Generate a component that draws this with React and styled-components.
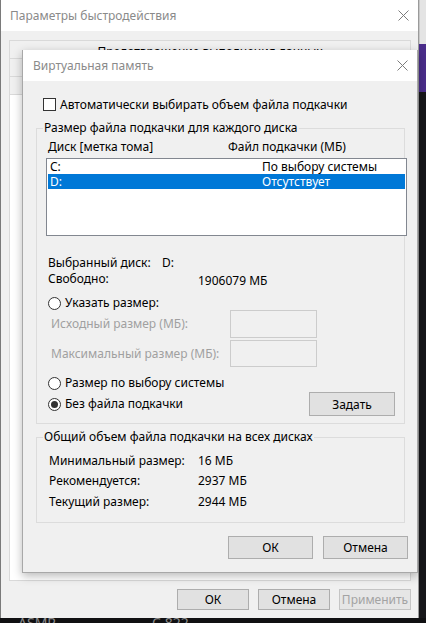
import styled, { createGlobalStyle } from "styled-components";

const GlobalStyle = createGlobalStyle`
  html, body {
    margin: 0;
    padding: 0;
    background: #121214;
  }
  body {
    font-family: "Noto Sans", "Liberation Sans", sans-serif;
    font-size: 12px;
    line-height: 16px;
    color: #000;
  }
`;

const Screen = styled.div`
  position: relative;
  width: 426px;
  height: 623px;
  overflow: hidden;
  background: #121214;
  display: flex;
  flex-direction: column;
`;

const DesktopRow = styled.div`
  display: flex;
  height: 618px;
`;

const SideStrip = styled.div`
  flex: 1;
  display: flex;
  flex-direction: column;
`;

const StripPart = styled.div`
  height: ${(p) => (p.$h ? `${p.$h}px` : "auto")};
  flex: ${(p) => (p.$h ? "none" : 1)};
  background: ${(p) => p.$bg};
  border-left: 1px solid ${(p) => p.$edge || "transparent"};
`;

const TaskStrip = styled.div`
  flex: 1;
  display: flex;
  gap: 96px;
  padding-left: 18px;
  overflow: hidden;
  color: #8a8a8a;
  font-size: 14px;
  line-height: 10px;
  background: #101012;
`;

/* ---------- back window ---------- */

const Window = styled.div`
  width: 417px;
  display: flex;
  flex-direction: column;
  background: #f0f0f0;
  border-left: 1px solid #7a7a7a;
  border-right: 1px solid #9a9a9a;
`;

const TitleBar = styled.div`
  height: 31px;
  flex: none;
  background: #fff;
  display: flex;
  align-items: center;
  justify-content: space-between;
  padding: 0 ${(p) => p.$padRight || 10}px 0 ${(p) => p.$padLeft || 9}px;
  color: #8a8a8a;
  font-size: 12px;
`;

const CloseIcon = () => (
  <svg width="11" height="11" viewBox="0 0 11 11">
    <path d="M0.5 0.5 L10.5 10.5 M10.5 0.5 L0.5 10.5" stroke="#7c7c7c" strokeWidth="1" fill="none" />
  </svg>
);

const WindowBody = styled.div`
  flex: 1;
  display: flex;
  flex-direction: column;
  padding: 9px 7px 8px 8px;
`;

const TabRow = styled.div`
  height: 18px;
  flex: none;
  border: 1px solid #d9d9d9;
  border-bottom: none;
  padding-top: ${(p) => p.$textDrop || 0}px;
  box-sizing: border-box;
  display: flex;
  align-items: center;
  justify-content: center;
  color: #000;
  background: #f0f0f0;
`;

const TabPanel = styled.div`
  flex: 1;
  background: #fff;
  border: 1px solid #d9d9d9;
`;

const WindowButtons = styled.div`
  display: flex;
  justify-content: flex-end;
  gap: 9px;
  margin-top: 8px;
`;

const Button = styled.button`
  width: ${(p) => p.$w || 72}px;
  height: ${(p) => p.$h || 21}px;
  padding: 0;
  font-family: inherit;
  font-size: 12px;
  background: ${(p) => (p.disabled ? "#e6e6e6" : "#e1e1e1")};
  color: ${(p) => (p.disabled ? "#a3a3a3" : "#000")};
  border: 1px solid ${(p) => (p.disabled ? "#c4c4c4" : "#adadad")};
  border-radius: 0;
`;

/* ---------- virtual memory dialog ---------- */

const Dialog = styled.div`
  position: absolute;
  left: 22px;
  top: 50px;
  width: 394px;
  height: 522px;
  display: flex;
  flex-direction: column;
  background: #f0f0f0;
  border: 1px solid #a8a8a8;
  border-top: none;
  box-shadow: 0 3px 9px rgba(0, 0, 0, 0.28);
`;

const DialogBody = styled.div`
  flex: 1;
  display: flex;
  flex-direction: column;
  padding: 17px 12px 0 13px;
`;

const CheckRow = styled.label`
  display: flex;
  align-items: center;
  gap: 4px;
  margin-left: 7px;
  height: 13px;
`;

const CheckBox = styled.span`
  width: 11px;
  height: 11px;
  border: 1px solid #333;
  background: #fff;
  flex: none;
`;

const Group = styled.fieldset`
  margin: ${(p) => p.$top}px 0 0 0;
  padding: 0 0 ${(p) => p.$bottom}px 0;
  border: 1px solid #dcdcdc;
  min-width: 0;
  display: flex;
  flex-direction: column;
`;

const Legend = styled.legend`
  margin-left: 6px;
  padding: 0 1px;
  line-height: 16px;
`;

const Line = styled.div`
  display: flex;
  align-items: center;
  height: ${(p) => p.$h || 16}px;
  margin-top: ${(p) => p.$mt || 0}px;
  padding-left: ${(p) => p.$pl || 11}px;
  color: ${(p) => (p.$muted ? "#a0a0a0" : "#000")};
`;

const Cell = styled.span`
  width: ${(p) => p.$w}px;
  flex: none;
  white-space: nowrap;
  position: relative;
  top: ${(p) => p.$shift || 0}px;
`;

const List = styled.div`
  margin: 3px 0 0 9px;
  width: 357px;
  height: 76px;
  border: 1px solid #828790;
  background: #fff;
  padding: 0 1px;
`;

const ListRow = styled.div`
  display: flex;
  align-items: center;
  height: 15px;
  line-height: 15px;
  overflow: hidden;
  padding-left: 2px;
  background: ${(p) => (p.$selected ? "#0078d7" : "transparent")};
  color: ${(p) => (p.$selected ? "#fff" : "#000")};
`;

const Radio = styled.span`
  width: 11px;
  height: 11px;
  border: 1px solid #333;
  border-radius: 50%;
  background: #fff;
  flex: none;
  display: flex;
  align-items: center;
  justify-content: center;
  margin-right: 4px;

  &::after {
    content: "";
    width: 7px;
    height: 7px;
    border-radius: 50%;
    background: ${(p) => (p.$checked ? "#333" : "transparent")};
  }
`;

const SizeBox = styled.span`
  width: 85px;
  height: ${(p) => p.$h}px;
  border: 1px solid #cccccc;
  background: #f0f0f0;
  flex: none;
`;

const Spacer = styled.span`
  flex: 1;
`;

const DialogButtons = styled.div`
  display: flex;
  justify-content: flex-end;
  gap: 10px;
  margin: 13px -3px 0 0;
`;

export default function App() {
  return (
    <>
      <GlobalStyle />
      <Screen>
        <DesktopRow>
          <Window>
            <TitleBar $padLeft={9} $padRight={9}>
              <span>Параметры быстродействия</span>
              <CloseIcon />
            </TitleBar>
            <WindowBody>
              <TabRow $textDrop={4}>Предотвращение выполнения данных</TabRow>
              <TabRow />
              <TabRow />
              <TabPanel />
              <WindowButtons>
                <Button>ОК</Button>
                <Button>Отмена</Button>
                <Button disabled>Применить</Button>
              </WindowButtons>
            </WindowBody>
          </Window>
          <SideStrip>
            <StripPart $h={44} $bg="#e4e4e4" $edge="#c8c8c8" />
            <StripPart $h={48} $bg="#4a2d8a" />
            <StripPart $bg="#17171a" />
          </SideStrip>
        </DesktopRow>
        <TaskStrip>
          <span>ASMR</span>
          <span>С 822</span>
        </TaskStrip>

        <Dialog>
          <TitleBar $padLeft={10} $padRight={9}>
            <span>Виртуальная память</span>
            <CloseIcon />
          </TitleBar>
          <DialogBody>
            <CheckRow>
              <CheckBox />
              Автоматически выбирать объем файла подкачки
            </CheckRow>

            <Group $top={9} $bottom={7}>
              <Legend>Размер файла подкачки для каждого диска</Legend>
              <Line $mt={3}>
                <Cell $w={180}>Диск [метка тома]</Cell>
                <Cell>Файл подкачки (МБ)</Cell>
              </Line>
              <List>
                <ListRow>
                  <Cell $w={212}>C:</Cell>
                  <Cell>По выбору системы</Cell>
                </ListRow>
                <ListRow $selected>
                  <Cell $w={212}>D:</Cell>
                  <Cell>Отсутствует</Cell>
                </ListRow>
              </List>
              <Line $mt={19}>
                <Cell $w={114}>Выбранный диск:</Cell>
                <Cell>D:</Cell>
              </Line>
              <Line>
                <Cell $w={150}>Свободно:</Cell>
                <Cell $shift={2}>1906079 МБ</Cell>
              </Line>
              <Line $mt={8} $pl={11}>
                <Radio />
                Указать размер:
              </Line>
              <Line $h={26} $pl={14} $muted>
                <Cell $w={179}>Исходный размер (МБ):</Cell>
                <SizeBox $h={26} />
              </Line>
              <Line $h={25} $mt={4} $pl={14} $muted>
                <Cell $w={179}>Максимальный размер (МБ):</Cell>
                <SizeBox $h={25} />
              </Line>
              <Line $mt={9}>
                <Radio />
                Размер по выбору системы
              </Line>
              <Line $h={24} $mt={1}>
                <Radio $checked />
                Без файла подкачки
                <Spacer />
                <Button $w={86} $h={24}>Задать</Button>
                <Cell $w={9} />
              </Line>
            </Group>

            <Group $top={5} $bottom={10}>
              <Legend>Общий объем файла подкачки на всех дисках</Legend>
              <Line $h={20} $mt={6} $pl={12}>
                <Cell $w={149}>Минимальный размер:</Cell>
                <Cell>16 МБ</Cell>
              </Line>
              <Line $h={20} $pl={12}>
                <Cell $w={149}>Рекомендуется:</Cell>
                <Cell>2937 МБ</Cell>
              </Line>
              <Line $h={21} $pl={12}>
                <Cell $w={149}>Текущий размер:</Cell>
                <Cell>2944 МБ</Cell>
              </Line>
            </Group>

            <DialogButtons>
              <Button $w={85} $h={23}>ОК</Button>
              <Button $w={85} $h={23}>Отмена</Button>
            </DialogButtons>
          </DialogBody>
        </Dialog>
      </Screen>
    </>
  );
}
